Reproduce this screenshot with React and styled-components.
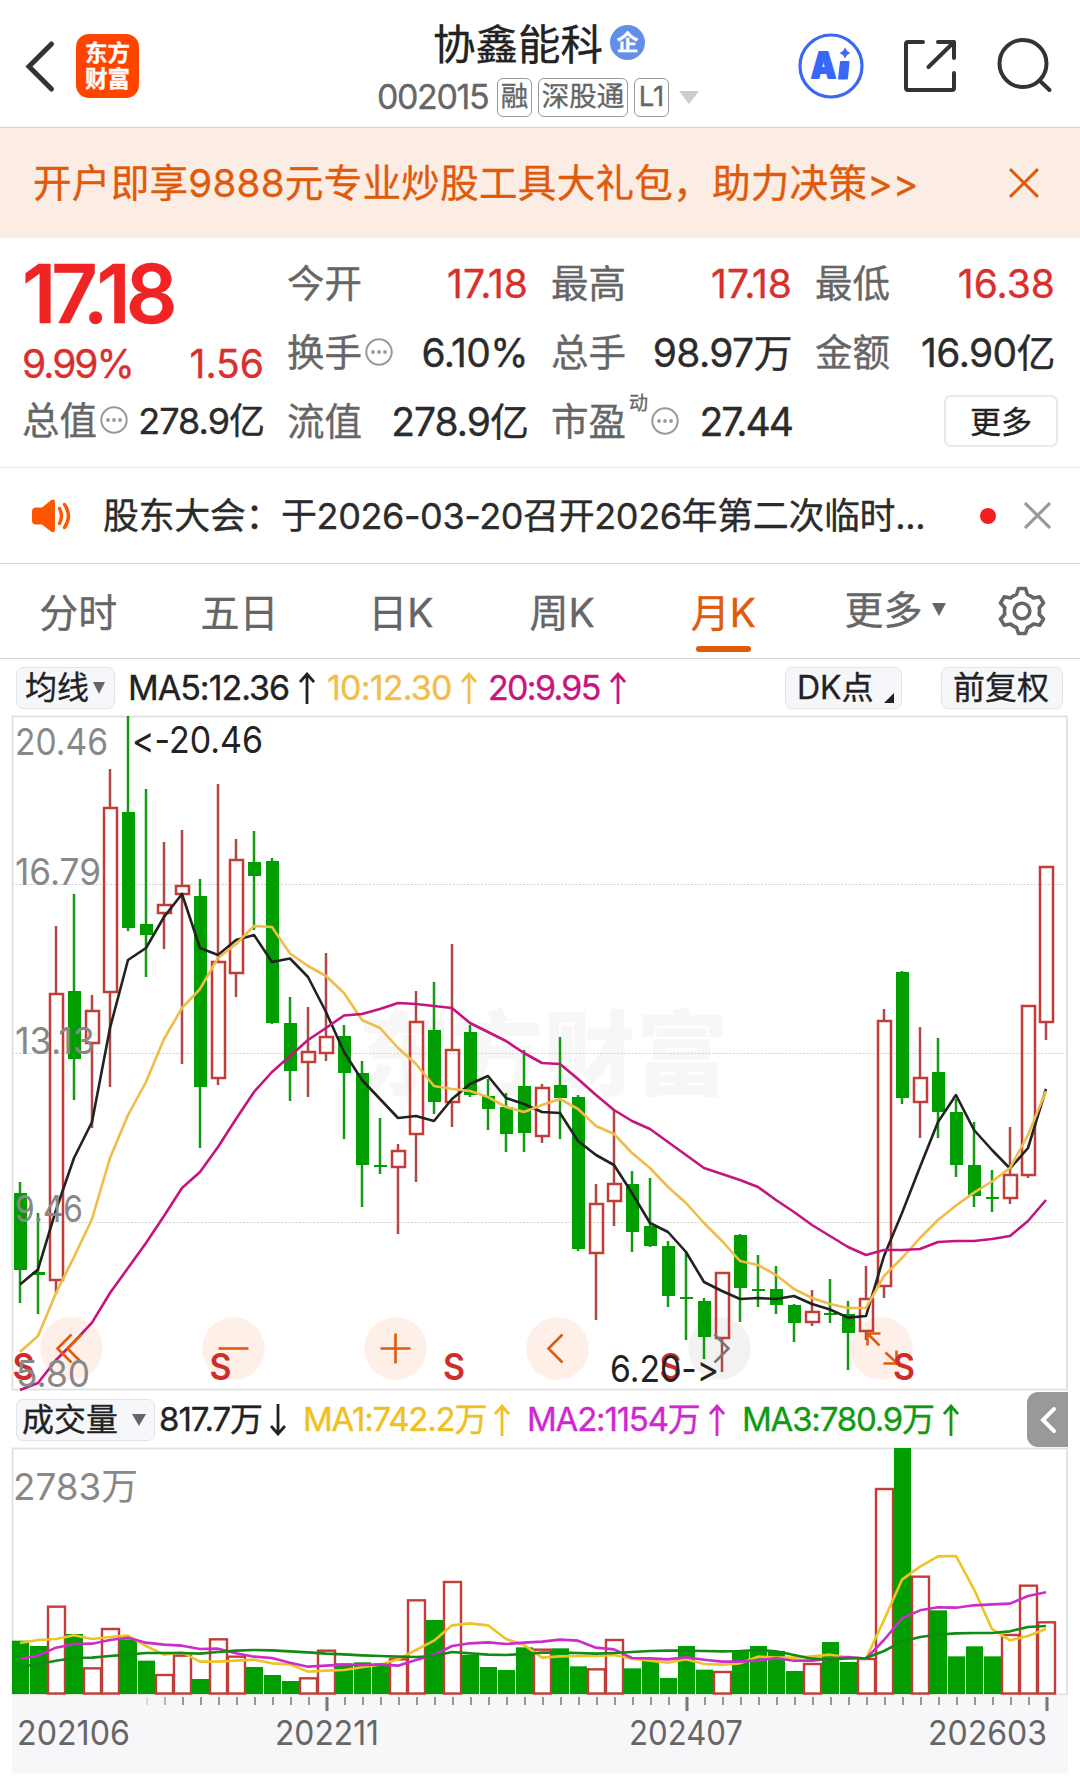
import React from "react";
import styled, { createGlobalStyle, css } from "styled-components";

const ORANGE = "#e05a0c";
const RED = "#d8302d";
const CANDLE_RED = "#c33c38";
const GREEN = "#009e00";

const GlobalStyle = createGlobalStyle`
  * {
    box-sizing: border-box;
  }

  body {
    margin: 0;
    background: #fff;
    font-family: Inter, "Noto Sans CJK SC", sans-serif;
    color: #2b2b2b;
    -webkit-text-stroke: 0.35px;
  }
`;

const Page = styled.div`
  display: flex;
  flex-direction: column;
  width: 1080px;
  height: 1784px;
  overflow: hidden;
  background: #fff;
  white-space: nowrap;
`;

const Txt = styled.span`
  font-size: ${p => p.$size || 34}px;
  letter-spacing: ${p => p.$ls || 0}px;
  color: ${p => p.$color || "inherit"};
  line-height: 1;
`;

/* header */

const Header = styled.header`
  display: grid;
  grid-template-columns: 377px 1fr 282px;
  height: 128px;
  border-bottom: 1px solid #cfd6d6;
`;

const HeaderLeft = styled.div`
  display: flex;
  align-items: center;
  height: 132px;
  padding-left: 22px;
  gap: 19px;
`;

const Logo = styled.div`
  display: flex;
  flex-direction: column;
  align-items: center;
  justify-content: center;
  width: 63px;
  height: 64px;
  border-radius: 13px;
  background: #ff4400;
  color: #fff;
  font-size: 22.5px;
  font-weight: 700;
  line-height: 26px;
`;

const HeaderMid = styled.div`
  display: flex;
  flex-direction: column;
`;

const TitleRow = styled.div`
  display: flex;
  align-items: center;
  height: 50px;
  margin-top: 16px;
  padding-left: 56px;
  gap: 7px;
  font-size: 42.5px;
  color: #222;
`;

const Verified = styled.span`
  display: flex;
  align-items: center;
  justify-content: center;
  width: 35px;
  height: 35px;
  margin-top: 2px;
  border-radius: 50%;
  background: #648fe8;
  color: #fff;
  font-size: 22px;
  font-weight: 700;
  line-height: 1;
`;

const CodeRow = styled.div`
  display: flex;
  align-items: center;
  height: 40px;
  margin-top: 11px;
  color: #666;
`;

const Code = styled(Txt)`
  width: 120px;
`;

const Badge = styled.span`
  display: flex;
  align-items: center;
  justify-content: center;
  width: ${p => p.$w}px;
  height: 39px;
  margin-right: 6px;
  border: 1.5px solid #999;
  border-radius: 6px;
  font-size: 27.5px;
  line-height: 1;
`;

const Caret = styled.i`
  width: 0;
  height: 0;
  margin-left: ${p => p.$ml || 0}px;
  border: ${p => p.$w / 2}px solid transparent;
  border-top: ${p => p.$h}px solid ${p => p.$color};
  border-bottom: 0;
`;

const HeaderRight = styled.div`
  display: flex;
  align-items: center;
  gap: 38px;
  height: 132px;
`;

/* promo */

const Promo = styled.div`
  display: flex;
  align-items: center;
  justify-content: space-between;
  height: 110px;
  padding: 0 41px 0 33px;
  background: #fcede4;
  color: ${ORANGE};
`;

/* quote */

const Quote = styled.section`
  display: grid;
  grid-template-columns: 242px 241px 241px 240px;
  column-gap: 23px;
  height: 230px;
  padding: 0 0 0 22px;
  border-bottom: 1px solid #e8e8e8;
`;

const QuoteCol = styled.div`
  display: flex;
  flex-direction: column;
  padding-top: 11px;
`;

const MainCol = styled(QuoteCol)`
  padding-top: 0;
`;

const Price = styled.div`
  height: 93px;
  padding-top: 16px;
  font-size: 81px;
  font-weight: 600;
  line-height: 81px;
  letter-spacing: -5px;
  color: #f02424;
`;

const Pair = styled.div`
  display: flex;
  align-items: center;
  justify-content: space-between;
  height: ${p => p.$h || 69}px;
`;

const Label = styled.span`
  display: flex;
  align-items: center;
  gap: 3px;
  font-size: 37.5px;
  line-height: 1;
  color: #666;
`;

const Sup = styled.span`
  align-self: flex-start;
  margin-top: -9px;
  font-size: 19px;
`;

const MoreButton = styled.button`
  align-self: flex-end;
  width: 114px;
  height: 52px;
  margin: 8px -3px 0 0;
  padding: 0 0 4px;
  border: 2px solid #e8e8e8;
  border-radius: 7px;
  background: #fff;
  color: #222;
  font: 31px "Noto Sans CJK SC", sans-serif;
`;

/* notice */

const Notice = styled.div`
  display: flex;
  align-items: center;
  height: 96px;
  padding-left: 31px;
  border-bottom: 1px solid #d4d4d4;
`;

const NoticeText = styled(Txt)`
  width: 850px;
  margin-left: 29px;
`;

const Dot = styled.i`
  width: 16px;
  height: 16px;
  margin: 0 28px 0 27px;
  border-radius: 50%;
  background: #f02020;
`;

/* tabs */

const Tabs = styled.nav`
  display: flex;
  height: 95px;
  border-bottom: 1px solid #d4d4d4;
`;

const Tab = styled.div`
  display: flex;
  flex-direction: column;
  align-items: center;
  justify-content: center;
  width: 161.3px;
  padding: 2px 5px 0 0;
  font-size: 39px;
  line-height: 1;
  color: ${p => (p.$active ? ORANGE : "#666")};

  &::after {
    content: "";
    width: 55px;
    height: 6px;
    margin-top: 14px;
    margin-bottom: -20px;
    border-radius: 3px;
    background: ${p => (p.$active ? ORANGE : "transparent")};
  }
`;

const MoreTab = styled.div`
  display: flex;
  align-items: center;
  width: 150px;
  padding: 0 0 4px 38px;
  font-size: 39px;
  line-height: 1;
  color: #666;
`;

const GearBox = styled.div`
  display: flex;
  align-items: center;
  margin-left: 40px;
`;

/* indicator rows */

const IndicatorRow = styled.div`
  display: flex;
  align-items: center;
  height: 57px;
  padding-left: 16px;
`;

const Chip = styled.div`
  display: flex;
  align-items: center;
  width: ${p => p.$w}px;
  height: 42px;
  margin-left: ${p => p.$ml || 0}px;
  padding-left: ${p => p.$pl}px;
  border: 1.5px solid #e2e4e9;
  border-radius: 7px;
  background: #f6f7fa;
  font-size: 32px;
  line-height: 1;
  color: #222;
`;

const Corner = styled.i`
  align-self: flex-end;
  width: 0;
  height: 0;
  margin: 0 0 5px 10px;
  border-left: 10px solid transparent;
  border-bottom: 10px solid #222;
`;

const Reading = styled.span`
  display: flex;
  align-items: center;
  justify-content: space-between;
  width: ${p => p.$w}px;
  margin-left: ${p => p.$ml}px;
  font-size: ${p => p.$size || 34}px;
  line-height: 1;
  letter-spacing: ${p => p.$ls}px;
  color: ${p => p.$color};
`;

const Toggle = styled.div`
  display: flex;
  align-items: center;
  justify-content: center;
  width: 41px;
  height: 55px;
  margin-left: auto;
  margin-right: 12px;
  border-radius: 11px 0 0 11px;
  background: #999;
`;

const panel = css`
  display: block;
  flex: none;
  margin-left: 12px;
  overflow: visible;
`;

const CandlePanel = styled.svg`
  ${panel}
`;

const VolumePanel = styled.svg`
  ${panel}
`;

/* data: [up, high, bodyTop, bodyBottom, low], in plot units */

const candles = [
  [0, 1182, 1193, 1270, 1303], [0, 1213, 1272, 1275, 1314], [1, 926, 994, 1280, 1294],
  [0, 894, 991, 1059, 1100], [1, 995, 1011, 1043, 1128], [1, 769, 808, 992, 1087],
  [0, 716, 812, 928, 931], [0, 789, 924, 935, 977], [1, 842, 905, 913, 949],
  [1, 830, 886, 894, 1064], [0, 879, 896, 1087, 1148], [1, 784, 962, 1078, 1085],
  [1, 839, 860, 973, 997], [0, 831, 862, 876, 930], [0, 858, 861, 1023, 1024],
  [0, 997, 1023, 1071, 1101], [1, 1007, 1052, 1062, 1097], [1, 953, 1037, 1053, 1061],
  [0, 1025, 1036, 1073, 1139], [0, 1061, 1073, 1165, 1207], [0, 1118, 1165, 1167, 1174],
  [1, 1144, 1151, 1167, 1234], [1, 991, 1022, 1134, 1182], [0, 982, 1030, 1102, 1114],
  [1, 944, 1050, 1102, 1127], [0, 1025, 1032, 1095, 1097], [0, 1079, 1096, 1109, 1130],
  [0, 1093, 1107, 1134, 1152], [0, 1050, 1086, 1133, 1152], [1, 1084, 1088, 1136, 1143],
  [0, 1037, 1085, 1098, 1139], [0, 1095, 1097, 1249, 1251], [1, 1184, 1204, 1253, 1320],
  [1, 1110, 1184, 1201, 1226], [0, 1171, 1184, 1232, 1252], [0, 1178, 1226, 1246, 1247],
  [0, 1241, 1246, 1296, 1307], [0, 1252, 1297, 1299, 1340], [0, 1298, 1301, 1337, 1359],
  [1, 1273, 1273, 1338, 1372], [0, 1234, 1235, 1288, 1322], [0, 1255, 1289, 1291, 1307],
  [0, 1266, 1289, 1305, 1314], [0, 1304, 1305, 1323, 1342], [1, 1290, 1312, 1322, 1326],
  [0, 1279, 1313, 1315, 1323], [0, 1301, 1314, 1333, 1370], [1, 1266, 1299, 1331, 1340],
  [1, 1009, 1021, 1286, 1298], [0, 971, 972, 1098, 1104], [1, 1027, 1078, 1102, 1138],
  [0, 1038, 1072, 1112, 1138], [0, 1099, 1112, 1165, 1177], [0, 1122, 1165, 1196, 1207],
  [0, 1170, 1197, 1199, 1212], [1, 1127, 1175, 1198, 1204], [1, 1006, 1006, 1175, 1178],
  [1, 867, 867, 1022, 1040],
];

const ma5 = [
  1284.5, 1269.4, 1210, 1158, 1122, 1028, 960, 948, 917, 894, 948, 955, 940, 935, 962, 958.5, 977, 1012, 1052,
  1080, 1099, 1118, 1116, 1121, 1099, 1084, 1076, 1098, 1104, 1112, 1113, 1141, 1155, 1165, 1193, 1223, 1232,
  1252, 1282, 1291, 1299, 1298, 1299, 1296, 1304, 1309.5, 1317.6, 1316, 1256, 1213, 1167, 1122, 1095, 1130,
  1150, 1168.5, 1148, 1089,
];

const ma10 = [
  1352, 1336, 1293, 1257, 1219, 1158, 1115, 1082, 1039, 1008, 989, 958, 944, 926, 927, 953.5, 966, 976, 993,
  1020, 1028, 1048, 1064, 1086, 1089, 1091, 1097, 1107, 1112, 1105, 1099, 1109, 1126, 1134, 1153, 1168, 1187,
  1203, 1223, 1241, 1261, 1265, 1275, 1289, 1298, 1304, 1308, 1308, 1276, 1258, 1238, 1220, 1205.5, 1192.6,
  1181.5, 1168, 1135, 1091,
];

const ma20 = [
  1390, 1383, 1360, 1342, 1322.6, 1293, 1268, 1243, 1216, 1188, 1172, 1147, 1119, 1092, 1072, 1056, 1040,
  1028, 1015.5, 1014, 1009, 1003, 1004, 1006, 1008, 1023, 1032, 1041, 1053, 1063, 1064, 1079, 1095, 1110,
  1121, 1129, 1142, 1155, 1168, 1174, 1180, 1187, 1200, 1212, 1225, 1236, 1247, 1255, 1250, 1250, 1249, 1242,
  1241, 1241, 1239, 1236, 1221, 1200,
];

// distance from the top of the volume panel, three units to a pixel
const volumes = [
  752, 768, 650, 732, 835, 717, 748, 812, 855, 797, 867, 748, 800, 831, 855, 873, 865, 782, 820, 817, 822, 808,
  631, 690, 576, 795, 831, 840, 772, 779, 775, 829, 838, 750, 835, 812, 864, 768, 839, 846, 780, 768, 783, 843,
  822, 756, 816, 807, 297, 174, 560, 661, 799, 769, 799, 735, 587, 697,
];

const volMa1 = [
  759, 750, 747, 736, 747, 741, 737, 768, 794, 787, 815, 815, 812, 809, 820, 823, 845, 842, 840, 832, 824, 808,
  780, 752, 706, 700, 706, 747, 765, 803, 799, 798, 798, 795, 806, 812, 818, 808, 822, 824, 820, 800, 803, 803,
  799, 794, 802, 806, 690, 569, 530, 499, 498, 598, 717, 751, 738, 717,
];

const volMa2 = [
  806, 797, 773, 762, 761, 750, 743, 758, 764, 767, 777, 776, 790, 800, 804, 818, 830, 827, 824, 825, 823, 827,
  810, 795, 768, 760, 757, 762, 758, 755, 749, 752, 773, 778, 804, 805, 808, 802, 809, 815, 815, 811, 805, 812,
  812, 806, 801, 806, 750, 685, 661, 652, 653, 646, 643, 641, 618, 607,
];

const volMa3 = [
  830, 823, 812, 804, 803, 798, 794, 789, 789, 789, 791, 786, 782, 780, 781, 784, 787, 791, 793, 796, 798, 800,
  801, 798, 786, 790, 794, 795, 792, 788, 788, 789, 791, 789, 786, 783, 782, 782, 783, 784, 783, 780, 784, 795,
  806, 808, 805, 804, 783, 755, 741, 734, 730, 729, 729, 724, 711, 708,
];

const xAt = i => 20 + i * 18;
const volY = v => 1390 + v / 3;
const linePoints = (list, fn = v => v) => list.map((v, i) => `${xAt(i)},${fn(v)}`).join(" ");

const Line = ({ points, color }) => (
  <polyline points={points} fill="none" stroke={color} strokeWidth="2.6" strokeLinejoin="round" />
);

const ChartText = ({ x, y, w, size = 37, color = "#888", children, ...rest }) => (
  <text x={x} y={y} fontSize={size} fill={color} textLength={w} lengthAdjust="spacingAndGlyphs" {...rest}>
    {children}
  </text>
);

/* icons */

const BackIcon = () => (
  <svg width="35" height="56" viewBox="0 0 35 56" fill="none" stroke="#333" strokeWidth="5" strokeLinecap="round">
    <path d="M29.500 6 7 28.500 29.500 51" />
  </svg>
);

const Cross = ({ size, color, width }) => (
  <svg width={size} height={size} viewBox="0 0 28 28" fill="none" stroke={color} strokeWidth={width}>
    <path d="M1 1 27 27M27 1 1 27" />
  </svg>
);

const Info = () => (
  <svg width="28" height="30" viewBox="0 0 28 30" fill="#999">
    <circle cx="14" cy="14" r="12.7" fill="none" stroke="#999" strokeWidth="2" />
    <circle cx="8" cy="14" r="1.9" />
    <circle cx="14" cy="14" r="1.9" />
    <circle cx="20" cy="14" r="1.9" />
  </svg>
);

const Arrow = ({ down }) => (
  <svg width="16" height="32" viewBox="0 0 16 32" fill="none" stroke="currentColor" strokeWidth="2.8">
    <path d={down ? "M8 0V30M1 22 8 30 15 22" : "M8 32V2M1 10 8 2 15 10"} />
  </svg>
);

const AiIcon = () => (
  <svg width="66" height="68" viewBox="0 0 66 68">
    <circle cx="33" cy="34" r="31" fill="none" stroke="#3868f5" strokeWidth="3.200" />
    <text x="13" y="45.500" fontSize="35" fontWeight="900" fill="#3868f5" stroke="#3868f5" strokeWidth="1.800" strokeLinejoin="round" textLength="25" lengthAdjust="spacingAndGlyphs">A</text>
    <path d="M43 30H50.500L49 46.500H41z" fill="#3868f5" stroke="#3868f5" strokeWidth="2" strokeLinejoin="round" />
    <path d="M47 15.500 49 19 52.300 21 49 23 47 26.500 45 23 41.700 21 45 19z" fill="#3868f5" />
  </svg>
);

const ShareIcon = () => (
  <svg width="56" height="56" viewBox="0 0 56 56" fill="none" stroke="#333" strokeWidth="4" strokeLinecap="round" strokeLinejoin="round">
    <path d="M21 4H6Q4 4 4 6V50Q4 52 6 52H50Q52 52 52 50V35" />
    <path d="M36 4H52V20M52 4 26.500 29" />
  </svg>
);

const SearchIcon = () => (
  <svg width="60" height="60" viewBox="0 0 60 60" fill="none" stroke="#333" strokeWidth="4" strokeLinecap="round">
    <circle cx="27" cy="27.500" r="23.500" />
    <path d="M43.500 44.500 53.500 54" />
  </svg>
);

const Speaker = () => (
  <svg width="43" height="36" viewBox="0 0 43 36">
    <path d="M5 9.500H11L20 2.300Q24 0 24 5V31Q24 36 20 33.500L11 26.500H5Q1 26.500 1 22.500V13.500Q1 9.500 5 9.500z" fill="#ff5500" />
    <path d="M28.500 10.500Q32.500 18 28.500 25.500M33.500 6.500Q41.500 18 33.500 29.500" fill="none" stroke="#ff5500" strokeWidth="3.400" strokeLinecap="round" />
  </svg>
);

const Gear = () => (
  <svg width="52" height="52" viewBox="0 0 52 52" fill="none" stroke="#666" strokeWidth="3.600" strokeLinejoin="round">
    <path d="M22.500 3.500H29.500L31.500 9.500Q34.500 10.500 37.500 13L43.800 11.800 47.500 18 43.200 22.800Q43.800 26 43.200 29.200L47.500 34 43.800 40.200 37.500 39Q34.500 41.500 31.500 42.500L29.500 48.500H22.500L20.500 42.500Q17.500 41.500 14.500 39L8.200 40.200 4.500 34 8.800 29.200Q8.200 26 8.800 22.800L4.500 18 8.200 11.800 14.500 13Q17.500 10.500 20.500 9.500z" />
    <circle cx="26" cy="26" r="7.800" />
  </svg>
);

const Field = ({ label, value, color, ls = -0.6, info, sup }) => (
  <Pair>
    <Label>
      {label}
      {sup && <Sup>{sup}</Sup>}
      {info && <Info />}
    </Label>
    <Txt $size={39} $ls={ls} $color={color}>{value}</Txt>
  </Pair>
);

const Candle = ({ data: [up, high, top, bottom, low], x }) => (
  <g>
    {up ? (
      <>
        <path d={`M${x} ${high}V${top}M${x} ${bottom}V${low}`} stroke="#b04845" strokeWidth="2.500" />
        <rect x={x - 6} y={top} width="13" height={bottom - top} fill="none" stroke={CANDLE_RED} strokeWidth="2.500" />
      </>
    ) : (
      <>
        <path d={`M${x} ${high}V${low}`} stroke="#129a12" strokeWidth="2.500" />
        <rect x={x - 6} y={top} width="13" height={bottom - top} fill={GREEN} />
      </>
    )}
  </g>
);

const tools = [
  { x: 71.5, d: "M0 -14 -14 0 0 14M10 -14 -4 0 10 14" },
  { x: 233.5, d: "M-15 0H15" },
  { x: 395.5, d: "M-15 0H15M0 -15V15" },
  { x: 557.5, d: "M5 -14 -9 0 5 14" },
  { x: 719.5, d: "M-5 -14 9 0 -5 14", off: true },
  { x: 881.5, d: "M-2 -3 -14 -15M-14 -3V-15H-1M4 4 16 15M15 2V15H2" },
];

const CandleChart = () => (
  <CandlePanel width="1056" height="675" viewBox="12 716 1056 675">
    <ChartText x="358" y="1088" w="370" size="92" color="#f7f7f7" fontWeight="800">东方财富</ChartText>
    {[884.5, 1053.5, 1222.5].map(y => (
      <path key={y} d={`M12 ${y}H1067`} stroke="#d2d2d2" strokeDasharray="2 1.500" />
    ))}
    <rect x="12.500" y="716.500" width="1054.500" height="673" fill="none" stroke="#e0e0e0" strokeWidth="1.800" />
    {tools.map(t => (
      <circle key={t.x} cx={t.x} cy="1348.500" r="31.300" fill={t.off ? "#f2f2f2" : "#fef0e9"} />
    ))}
    {candles.map((c, i) => (
      <Candle key={i} data={c} x={xAt(i)} />
    ))}
    <Line points={linePoints(ma5)} color="#222" />
    <Line points={linePoints(ma10)} color="#f0bc48" />
    <Line points={linePoints(ma20)} color="#c4157e" />
    {tools.map(t => (
      <path key={t.x} d={t.d} transform={`translate(${t.x} 1348.500)`} fill="none" stroke={t.off ? "#777" : ORANGE} strokeWidth="2.600" />
    ))}
    {[12.5, 209.5, 443, 659.5, 893].map(x => (
      <ChartText key={x} x={x} y="1380" w="22" color="#cc2f2b" fontWeight="600">S</ChartText>
    ))}
    <ChartText x="15" y="755" w="93">20.46</ChartText>
    <ChartText x="15" y="885" w="86">16.79</ChartText>
    <ChartText x="15" y="1054" w="80">13.13</ChartText>
    <ChartText x="15" y="1222" w="68">9.46</ChartText>
    <ChartText x="16" y="1387" w="74">5.80</ChartText>
    <ChartText x="132" y="753" w="131" color="#222" style={{ fontFeatureSettings: '"calt" 0' }}>&lt;-20.46</ChartText>
    <ChartText x="610" y="1382" w="109" color="#222" style={{ fontFeatureSettings: '"calt" 0' }}>6.20-&gt;</ChartText>
  </CandlePanel>
);

const VolumeChart = () => (
  <VolumePanel width="1056" height="327" viewBox="12 1448 1056 327">
    <rect x="12" y="1696" width="1056" height="78" fill="#f7f7fa" />
    <rect x="12.500" y="1448.500" width="1054.500" height="246" fill="none" stroke="#e0e0e0" strokeWidth="1.800" />
    {volumes.map((v, i) =>
      candles[i][0] ? (
        <rect key={i} x={xAt(i) - 8} y={volY(v)} width="17" height={1693.5 - volY(v)} fill="none" stroke={CANDLE_RED} strokeWidth="2.400" />
      ) : (
        <rect key={i} x={xAt(i) - 8} y={volY(v)} width="17" height={1694 - volY(v)} fill={GREEN} />
      )
    )}
    <Line points={linePoints(volMa1, volY)} color="#ecc423" />
    <Line points={linePoints(volMa2, volY)} color="#cc2ccc" />
    <Line points={linePoints(volMa3, volY)} color="#138a13" />
    {candles.map((_, i) => {
      const major = i % 20 === 17;
      if (i < 7) return null;
      return (
        <path
          key={i}
          d={`M${xAt(i) + 1} 1697V${major ? 1711 : 1705}`}
          stroke={major ? "#777" : "#999"}
          strokeWidth={major ? 3 : 2}
          opacity={i < 9 ? 0.3 + (i - 7) * 0.4 : 1}
        />
      );
    })}
    <ChartText x="13" y="1500" w="125">2783万</ChartText>
    <ChartText x="17" y="1745" w="113" size="34" color="#666">202106</ChartText>
    <ChartText x="275" y="1745" w="104" size="34" color="#666">202211</ChartText>
    <ChartText x="629" y="1745" w="114" size="34" color="#666">202407</ChartText>
    <ChartText x="928" y="1745" w="119" size="34" color="#666">202603</ChartText>
  </VolumePanel>
);

const tabs = ["分时", "五日", "日K", "周K", "月K"];

export default function App() {
  return (
    <Page>
      <GlobalStyle />
      <Header>
        <HeaderLeft>
          <BackIcon />
          <Logo>
            <span>东方</span>
            <span>财富</span>
          </Logo>
        </HeaderLeft>
        <HeaderMid>
          <TitleRow>
            协鑫能科
            <Verified>企</Verified>
          </TitleRow>
          <CodeRow>
            <Code $size={34} $ls={-1.4}>002015</Code>
            <Badge $w={35}>融</Badge>
            <Badge $w={90}>深股通</Badge>
            <Badge $w={35}>L1</Badge>
            <Caret $w={20} $h={13} $ml={4} $color="#ccc" />
          </CodeRow>
        </HeaderMid>
        <HeaderRight>
          <AiIcon />
          <ShareIcon />
          <SearchIcon />
        </HeaderRight>
      </Header>

      <Promo>
        <Txt $size={38.6} $ls={0.25}>开户即享9888元专业炒股工具大礼包，助力决策&gt;&gt;</Txt>
        <Cross size={30} color={ORANGE} width={2.8} />
      </Promo>

      <Quote>
        <MainCol>
          <Price>17.18</Price>
          <Pair $h={65}>
            <Txt $size={39} $ls={-2} $color={RED}>9.99%</Txt>
            <Txt $size={39} $ls={0} $color={RED}>1.56</Txt>
          </Pair>
          <Pair $h={50}>
            <Label>总值<Info /></Label>
            <Txt $size={36} $ls={-1}>278.9亿</Txt>
          </Pair>
        </MainCol>
        <QuoteCol>
          <Field label="今开" value="17.18" color={RED} ls={0} />
          <Field label="换手" value="6.10%" info />
          <Field label="流值" value="278.9亿" ls={-1} />
        </QuoteCol>
        <QuoteCol>
          <Field label="最高" value="17.18" color={RED} ls={0} />
          <Field label="总手" value="98.97万" />
          <Field label="市盈" value="27.44" ls={-2} info sup="动" />
        </QuoteCol>
        <QuoteCol>
          <Field label="最低" value="16.38" color={RED} ls={0} />
          <Field label="金额" value="16.90亿" />
          <MoreButton>更多</MoreButton>
        </QuoteCol>
      </Quote>

      <Notice>
        <Speaker />
        <NoticeText $size={36} $ls={-0.4}>股东大会：于2026-03-20召开2026年第二次临时...</NoticeText>
        <Dot />
        <Cross size={27} color="#999" width={3.2} />
      </Notice>

      <Tabs>
        {tabs.map(t => (
          <Tab key={t} $active={t === "月K"}>{t}</Tab>
        ))}
        <MoreTab>
          更多
          <Caret $w={14} $h={13} $ml={9} $color="#666" />
        </MoreTab>
        <GearBox>
          <Gear />
        </GearBox>
      </Tabs>

      <IndicatorRow>
        <Chip $w={99} $pl={8}>
          均线
          <Caret $w={13} $h={12} $ml={4} $color="#666" />
        </Chip>
        <Reading $w={187} $ml={13} $ls={-1} $color="#222">MA5:12.36<Arrow /></Reading>
        <Reading $w={150} $ml={12} $ls={-0.8} $color="#f4bd48">10:12.30<Arrow /></Reading>
        <Reading $w={138} $ml={11} $ls={-1.7} $color="#c8157f">20:9.95<Arrow /></Reading>
        <Chip $w={117} $pl={11} $ml={159}>
          DK点
          <Corner />
        </Chip>
        <Chip $w={122} $pl={11} $ml={39}>前复权</Chip>
      </IndicatorRow>
      <CandleChart />
      <IndicatorRow>
        <Chip $w={139} $pl={5}>
          成交量
          <Caret $w={14} $h={12} $ml={14} $color="#666" />
        </Chip>
        <Reading $w={127} $ml={4} $size={33} $ls={-1} $color="#222">817.7万<Arrow down /></Reading>
        <Reading $w={207} $ml={17} $size={33} $ls={-1.2} $color="#f0c020">MA1:742.2万<Arrow /></Reading>
        <Reading $w={198} $ml={17} $size={33} $ls={-1.2} $color="#d028d0">MA2:1154万<Arrow /></Reading>
        <Reading $w={217} $ml={17} $size={33} $ls={-1.2} $color="#119a11">MA3:780.9万<Arrow /></Reading>
        <Toggle>
          <svg width="18" height="28" viewBox="0 0 18 28" fill="none" stroke="#fff" strokeWidth="4" strokeLinecap="round">
            <path d="M15 3 4 14 15 25" />
          </svg>
        </Toggle>
      </IndicatorRow>
      <VolumeChart />
    </Page>
  );
}
